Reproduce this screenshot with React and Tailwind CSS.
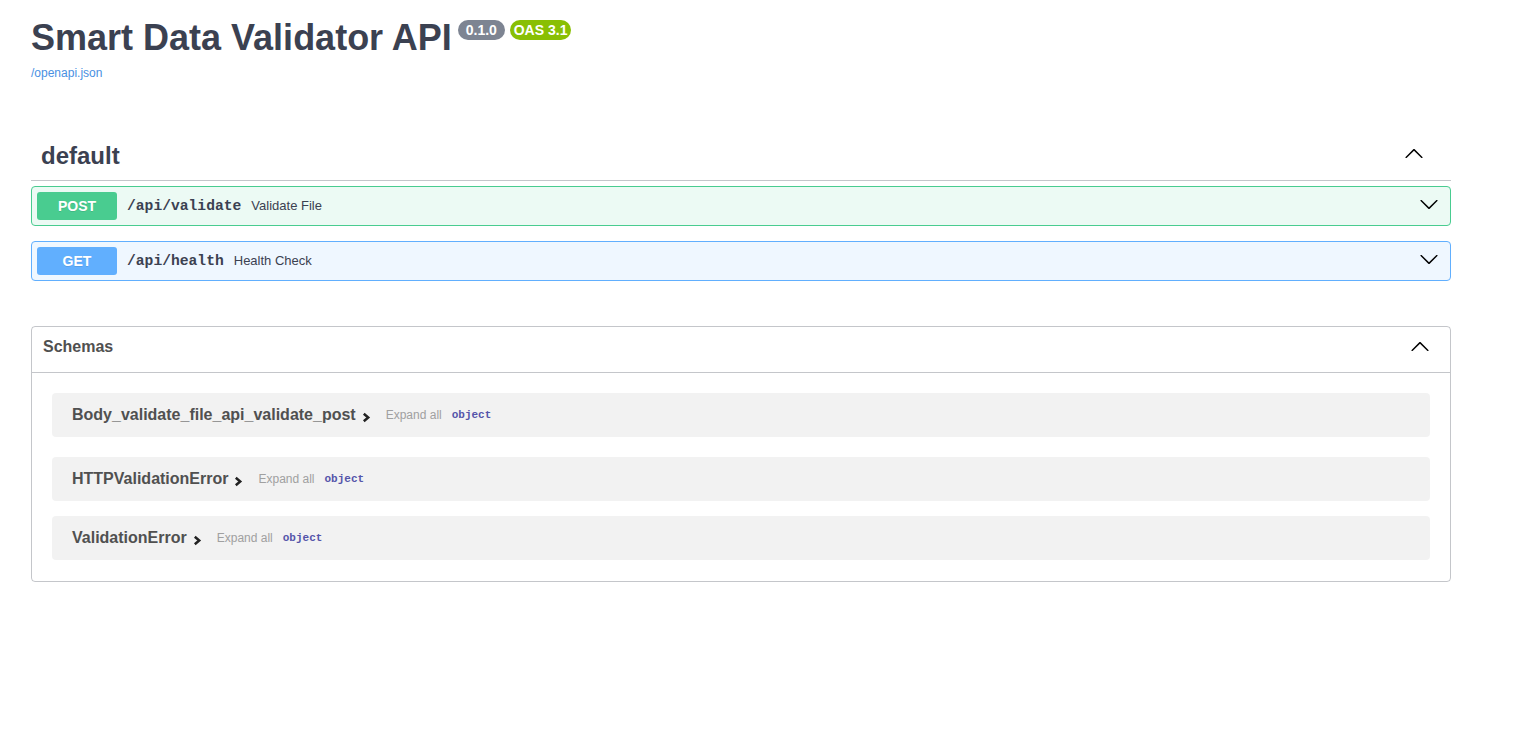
const sans = { fontFamily: '"Liberation Sans", Arial, sans-serif' };

function Chevron({ up, className }) {
  return (
    <svg width="20" height="20" viewBox="0 0 20 20" className={className} style={up ? { transform: "rotate(180deg)" } : undefined}>
      <path
        fill="#000"
        d="M17.418 6.109c.272-.268.709-.268.979 0s.271.701 0 .969l-7.908 7.83c-.27.268-.707.268-.979 0l-7.908-7.83c-.27-.268-.27-.701 0-.969.271-.268.709-.268.979 0L10 13.25l7.418-7.141z"
      />
    </svg>
  );
}

function Opblock({ method, path, desc, border, bg, badge }) {
  return (
    <div className={`flex items-center h-[40px] border ${border} ${bg} rounded-[4px] pl-[5px] pr-[11px]`}>
      <span className={`w-[80px] h-[28px] flex items-center justify-center rounded-[3px] ${badge} text-white text-[14px] font-bold [text-shadow:0_1px_0_rgba(0,0,0,0.1)]`}>
        {method}
      </span>
      <span className="pl-[10px] pr-[10px] font-['Liberation_Mono',monospace] font-bold text-[14.67px] text-[#3b4151]">{path}</span>
      <span className="text-[13px] text-[#3b4151]">{desc}</span>
      <div className="flex-1" />
      <Chevron className="mb-[5px]" />
    </div>
  );
}

function SchemaRow({ name }) {
  return (
    <div className="flex items-center h-[44px] rounded-[4px] bg-black/5 pl-[20px]">
      <span className="text-[16px] font-bold text-[#505050]">{name}</span>
      <svg width="9" height="11" viewBox="0 0 9 11" className="ml-[6px] mt-[4px]">
        <polyline points="1.8,1.8 6.2,5.5 1.8,9.2" fill="none" stroke="#222" strokeWidth="2.5" />
      </svg>
      <span className="ml-[15px] text-[12px] text-[#a0a0a0]">Expand all</span>
      <span className="ml-[10px] text-[11px] font-semibold text-[#55a] font-['Liberation_Mono',monospace]">object</span>
    </div>
  );
}

export default function App() {
  return (
    <div className="min-h-screen bg-white" style={sans}>
      <div className="ml-[31px] w-[1420px] pt-[18px] pb-[40px]">
        {/* info */}
        <div className="flex items-start">
          <h1 className="text-[36px] leading-[40px] font-bold text-[#3b4151]">Smart Data Validator API</h1>
          <span className="ml-[6px] mt-[2px] rounded-full bg-[#7d8492] px-[4px] py-[2px] text-white text-[14px] leading-[16px] font-bold whitespace-pre">
            {" 0.1.0 "}
          </span>
          <span className="ml-[5px] mt-[2px] rounded-full bg-[#89bf04] px-[4px] py-[2px] text-white text-[14px] leading-[16px] font-bold whitespace-pre">
            OAS 3.1
          </span>
        </div>
        <a className="block mt-[8px] text-[12px] leading-[14px] text-[#4990e2]">/openapi.json</a>

        {/* default tag */}
        <div className="mt-[51px] flex items-center justify-between h-[50px] border-b border-[#3b4151]/30 pl-[10px] pr-[27px]">
          <h3 className="text-[24px] leading-[28px] font-bold text-[#3b4151]">default</h3>
          <Chevron up className="mb-[3px]" />
        </div>

        <div className="mt-[5px] flex flex-col gap-[15px]">
          <Opblock method="POST" path="/api/validate" desc="Validate File" border="border-[#49cc90]" bg="bg-[#49cc90]/10" badge="bg-[#49cc90]" />
          <Opblock method="GET" path="/api/health" desc="Health Check" border="border-[#61affe]" bg="bg-[#61affe]/10" badge="bg-[#61affe]" />
        </div>

        {/* schemas */}
        <div className="mt-[45px] border border-[#3b4151]/30 rounded-[4px]">
          <div className="flex items-center justify-between h-[46px] border-b border-[#3b4151]/30 pl-[11px] pr-[20px] pb-[6px]">
            <h4 className="text-[16px] leading-[18px] font-bold text-[#505050]">Schemas</h4>
            <Chevron up />
          </div>
          <div className="px-[20px] pt-[20px] pb-[21px]">
            <SchemaRow name="Body_validate_file_api_validate_post" />
            <div className="mt-[20px]">
              <SchemaRow name="HTTPValidationError" />
            </div>
            <div className="mt-[15px]">
              <SchemaRow name="ValidationError" />
            </div>
          </div>
        </div>
      </div>
    </div>
  );
}
